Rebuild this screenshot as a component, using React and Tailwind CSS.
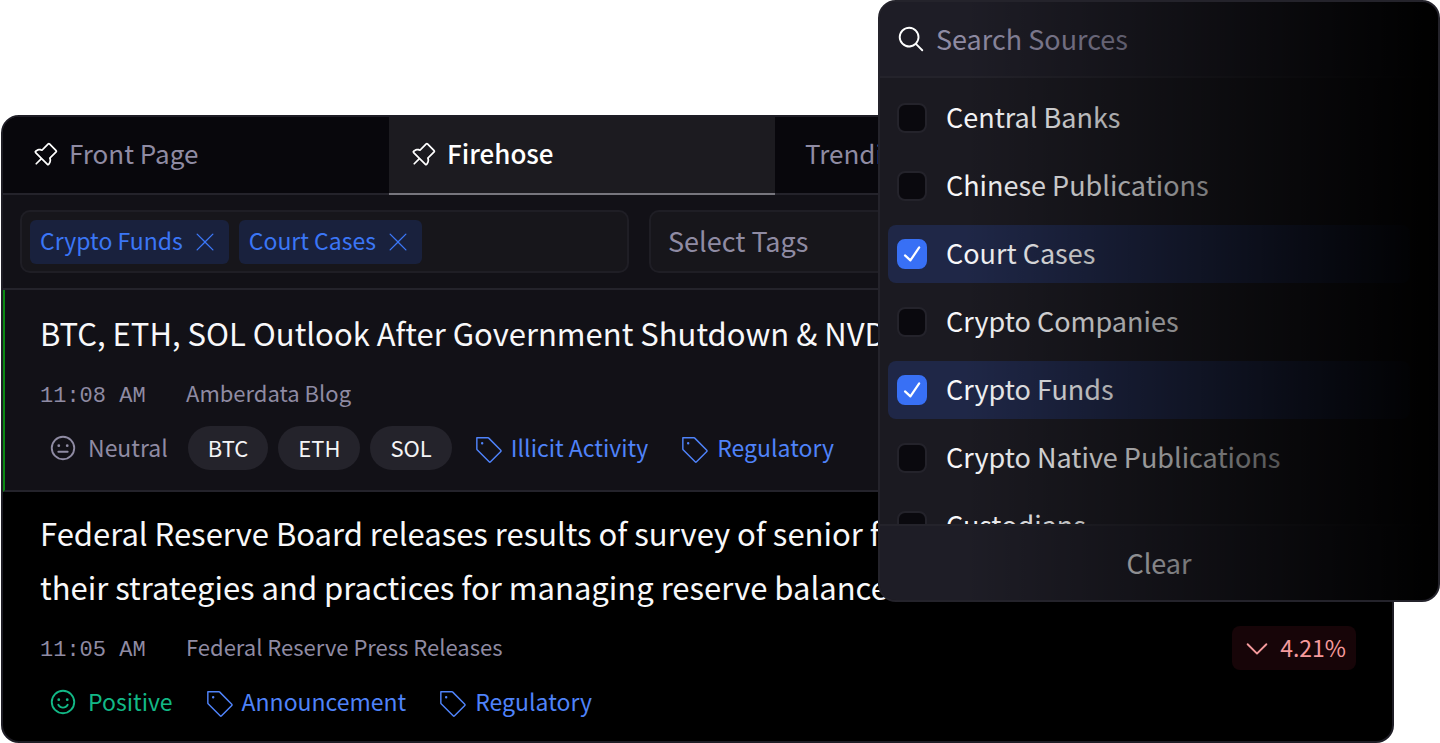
import { useState } from "react";
import {
  PiPushPin,
  PiXLight,
  PiSmiley,
  PiSmileyMeh,
  PiTagLight,
  PiMagnifyingGlass,
  PiCaretDown,
} from "react-icons/pi";

const SOURCES = [
  "Central Banks",
  "Chinese Publications",
  "Court Cases",
  "Crypto Companies",
  "Crypto Funds",
  "Crypto Native Publications",
  "Custodians",
];

function Tab({ label, pinned, active }) {
  return (
    <button
      type="button"
      role="tab"
      aria-selected={Boolean(active)}
      className={
        "flex h-[78px] w-[386px] flex-none items-center gap-2.5 border-b-2 text-[26px] leading-10 " +
        (active
          ? "border-[#77767e] bg-[#1c1b20] pl-5 font-medium text-white"
          : "border-[#24232b] bg-[#08070c] text-[#8f8ba3] " + (pinned ? "pl-7" : "pl-[30px]"))
      }
    >
      {pinned && <PiPushPin className="size-7 text-white" />}
      <span className="pb-1">{label}</span>
    </button>
  );
}

function FilterChip({ label, onRemove }) {
  return (
    <span className="flex h-11 items-center gap-2 rounded-md bg-[#19213d] px-2.5 text-[23px] text-[#3b76f6]">
      <span className="pb-0.5">{label}</span>
      <button type="button" aria-label={"Remove " + label} onClick={onRemove}>
        <PiXLight className="size-7" />
      </button>
    </span>
  );
}

function Sentiment({ positive }) {
  const Icon = positive ? PiSmiley : PiSmileyMeh;
  return (
    <span
      className={
        "flex h-11 items-center gap-2.5 pr-2.5 pl-2 text-[23px] " +
        (positive ? "text-[#12b886]" : "text-[#8f8ba3]")
      }
    >
      <Icon className="size-[30px]" />
      <span className="pb-0.5">{positive ? "Positive" : "Neutral"}</span>
    </span>
  );
}

function Pill({ children }) {
  return (
    <span className="flex h-11 items-center rounded-full bg-[#24232b] px-5 pb-0.5 text-[22px] text-[#f4f4f6]">
      {children}
    </span>
  );
}

function TopicTag({ children }) {
  return (
    <a href="#" className="flex h-11 items-center gap-2 px-2.5 text-[23px] text-[#4f83fa]">
      <PiTagLight className="size-[31px]" />
      <span className="pb-0.5">{children}</span>
    </a>
  );
}

function Meta({ time, source, children }) {
  return (
    <div className="mt-3 flex h-11 items-center text-[22px] text-[#8f8ba3]">
      <div className="flex items-baseline">
        <time className="w-[146px] flex-none font-['Liberation_Mono',monospace]">{time}</time>
        <span>{source}</span>
      </div>
      {children}
    </div>
  );
}

function SourceOption({ label, checked, onToggle }) {
  return (
    <label
      className={
        "flex h-[58px] flex-none items-center gap-[19px] rounded-lg pl-[9px] text-[27px] text-[#f8f8fa] " +
        (checked ? "bg-[#1f2747]" : "")
      }
    >
      <span className="grid size-[30px] flex-none place-items-center">
        <input
          type="checkbox"
          checked={checked}
          onChange={onToggle}
          className="col-start-1 row-start-1 size-[30px] appearance-none rounded-lg border-2 border-[#24232b] bg-[#0a090e] checked:border-[#3870f5] checked:bg-[#3870f5]"
        />
        {checked && (
          <svg
            viewBox="0 0 30 30"
            fill="none"
            stroke="currentColor"
            strokeWidth="2.2"
            strokeLinecap="round"
            strokeLinejoin="round"
            className="pointer-events-none col-start-1 row-start-1 size-[30px] text-white"
          >
            <path d="M8 16.4 13.4 21.4 22.2 8.4" />
          </svg>
        )}
      </span>
      <span className="pb-0.5">{label}</span>
    </label>
  );
}

export default function App() {
  const [selected, setSelected] = useState(["Crypto Funds", "Court Cases"]);
  const toggle = (name) =>
    setSelected((list) =>
      list.includes(name) ? list.filter((n) => n !== name) : [...list, name]
    );

  return (
    <div className="relative overflow-hidden bg-white pt-[115px] font-['Noto_Sans_CJK_SC',sans-serif]">
      <main className="mr-[46px] ml-px overflow-hidden rounded-[18px] border-2 border-[#1e1d25] bg-black">
        <div role="tablist" className="flex overflow-hidden bg-[#08070c]">
          <Tab label="Front Page" pinned />
          <Tab label="Firehose" pinned active />
          <Tab label="Trending" />
          <Tab label="Saved" />
        </div>

        <div className="flex gap-5 border-b-2 border-[#24232b] bg-[#121117] px-[17px] py-[15px]">
          <div className="flex h-[63px] w-[609px] flex-none items-center gap-2.5 rounded-[10px] border-2 border-[#1f1e25] bg-[#17161b] px-2">
            {selected.map((name) => (
              <FilterChip key={name} label={name} onRemove={() => toggle(name)} />
            ))}
          </div>
          <button
            type="button"
            className="flex h-[63px] flex-1 items-center rounded-[10px] border-2 border-[#1f1e25] bg-[#17161b] px-[17px] text-[27px] text-[#8f8ba3]"
          >
            Select Tags
          </button>
        </div>

        <article className="border-b-2 border-l-2 border-b-[#24232b] border-l-[#0a8a12] bg-[#121117] pt-4 pr-9 pb-5 pl-[35px]">
          <h2 className="truncate text-[31px] leading-[54px] text-[#f8f8fa]">
            BTC, ETH, SOL Outlook After Government Shutdown &amp; NVDA Earnings
          </h2>
          <Meta time="11:08 AM" source="Amberdata Blog" />
          <div className="mt-2.5 flex gap-2.5">
            <Sentiment />
            <Pill>BTC</Pill>
            <Pill>ETH</Pill>
            <Pill>SOL</Pill>
            <TopicTag>Illicit Activity</TopicTag>
            <TopicTag>Regulatory</TopicTag>
          </div>
        </article>

        <article className="pt-3.5 pr-9 pb-[17px] pl-[37px]">
          <h2 className="text-[31px] leading-[54px] text-[#f8f8fa]">
            Federal Reserve Board releases results of survey of senior financial officers about
            <br />
            their strategies and practices for managing reserve balances
          </h2>
          <Meta time="11:05 AM" source="Federal Reserve Press Releases">
            <span className="ml-auto flex h-11 items-center gap-2 rounded-lg bg-[#170508] px-2.5 text-[23px] text-[#f59a9c]">
              <PiCaretDown className="size-[30px]" />
              <span className="pb-0.5">4.21%</span>
            </span>
          </Meta>
          <div className="mt-2.5 flex gap-2.5">
            <Sentiment positive />
            <TopicTag>Announcement</TopicTag>
            <TopicTag>Regulatory</TopicTag>
          </div>
        </article>
      </main>

      <section
        aria-label="Sources"
        className="absolute top-0 right-0 flex h-[602px] w-[562px] flex-col overflow-hidden rounded-[18px] border-2 border-[#24232b] bg-[#1b1a21]"
      >
        <div className="flex h-[76px] flex-none items-center gap-2.5 border-b-2 border-[#24232b] bg-[#1e1d26] pl-4">
          <PiMagnifyingGlass className="size-[30px] flex-none text-white" />
          <input
            type="search"
            aria-label="Search Sources"
            placeholder="Search Sources"
            className="min-w-0 flex-1 bg-transparent text-[27px] outline-none placeholder:text-[#8f8ba3]"
          />
        </div>
        <div className="flex min-h-0 flex-1 flex-col gap-2.5 overflow-hidden pt-[11px] pr-7 pl-2">
          {SOURCES.map((name) => (
            <SourceOption
              key={name}
              label={name}
              checked={selected.includes(name)}
              onToggle={() => toggle(name)}
            />
          ))}
        </div>
        <button
          type="button"
          onClick={() => setSelected([])}
          className="h-[76px] flex-none border-t-2 border-[#24232b] bg-[#1e1d26] text-[27px] text-[#e0e0e4]"
        >
          Clear
        </button>
        <div className="pointer-events-none absolute inset-0 bg-linear-to-r/srgb from-transparent from-15% to-black" />
      </section>
    </div>
  );
}
